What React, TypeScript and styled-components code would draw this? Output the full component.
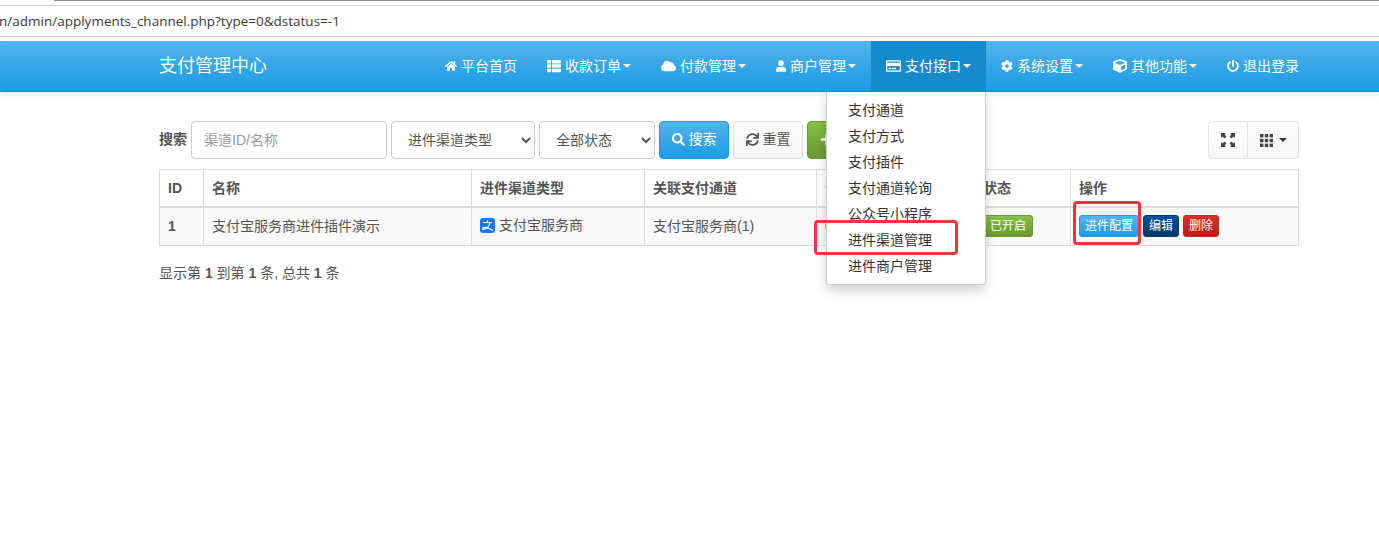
import React from 'react';
import styled, { createGlobalStyle } from 'styled-components';
import {
	FaHome,
	FaThList,
	FaCloud,
	FaUser,
	FaRegCreditCard,
	FaCog,
	FaCube,
	FaPowerOff,
	FaSearch,
	FaSync,
	FaPlus
} from 'react-icons/fa';

const GlobalStyle = createGlobalStyle`
	* {
		box-sizing: border-box;
	}
	html, body {
		margin: 0;
		padding: 0;
		background: #fff;
		overflow: hidden;
	}
	body {
		font-family: "Liberation Sans", "Noto Sans CJK SC", sans-serif;
		font-size: 14px;
		line-height: 20px;
		color: #333;
	}
`;

const Page = styled.div`
	position: relative;
	width: 1379px;
	height: 551px;
	overflow: hidden;
`;

const TopStrip = styled.div`
	height: 6px;
	border-bottom: 1px solid #d4d4d4;
	display: flex;
	justify-content: flex-end;
`;

const TabEdge = styled.div`
	width: 1325px;
	height: 1px;
	background: #8c8c8c;
`;

const AddressBar = styled.div`
	height: 31px;
	border-bottom: 1px solid #d0d0d0;
	display: flex;
	align-items: center;
	font-family: "Open Sans", "Liberation Sans", sans-serif;
	font-size: 13.5px;
	color: #3a3a3a;
	overflow: hidden;
`;

const Url = styled.span`
	margin-left: -8px;
	white-space: nowrap;
`;

const NavBar = styled.nav`
	margin-top: 4px;
	height: 51px;
	padding: 0 65px 0 159px;
	display: flex;
	align-items: stretch;
	justify-content: space-between;
	background: linear-gradient(to bottom, #54b4eb, #2fa4e7 60%, #1d9ce5);
	border-bottom: 1px solid #1b8fd3;
	box-shadow: 0 2px 6px rgba(0, 0, 0, 0.08);
`;

const Brand = styled.div`
	display: flex;
	align-items: center;
	padding-bottom: 1px;
	color: #fff;
	font-size: 18px;
`;

const NavList = styled.div`
	display: flex;
	align-items: stretch;
`;

const NavItem = styled.div<{ $active?: boolean }>`
	display: flex;
	align-items: center;
	gap: 4px;
	padding: 0 15px;
	color: #fff;
	font-size: 14px;
	white-space: nowrap;
	background: ${(p) => (p.$active ? '#178acc' : 'transparent')};
`;

const NavIcon = styled.span<{ $width: number }>`
	display: flex;
	justify-content: center;
	width: ${(p) => p.$width}px;
	svg {
		width: ${(p) => p.$width}px;
		height: 14px;
	}
`;

const Caret = styled.span<{ $dark?: boolean }>`
	width: 0;
	height: 0;
	margin-left: -2px;
	border-top: 4px solid ${(p) => (p.$dark ? '#333' : '#fff')};
	border-left: 4px solid transparent;
	border-right: 4px solid transparent;
`;

const Content = styled.main`
	padding: 29px 80px 0 159px;
`;

const Toolbar = styled.div`
	display: flex;
	align-items: center;
	gap: 4px;
	height: 38px;
`;

const SearchLabel = styled.label`
	margin-top: -2px;
	font-weight: 700;
	color: #555;
`;

const SearchInput = styled.input`
	width: 196px;
	height: 38px;
	padding: 0 12px 1px;
	border: 1px solid #ccc;
	border-radius: 4px;
	font: inherit;
	color: #555;
	&::placeholder {
		color: #999;
		opacity: 1;
	}
`;

const FilterSelect = styled.select<{ $width: number }>`
	width: ${(p) => p.$width}px;
	height: 38px;
	padding: 0 12px 1px;
	border: 1px solid #ccc;
	border-radius: 4px;
	background: #fff;
	font: inherit;
	color: #555;
`;

const Button = styled.button<{ $kind: 'primary' | 'plain' | 'success' }>`
	display: flex;
	align-items: center;
	justify-content: center;
	gap: 4px;
	width: 70px;
	height: 38px;
	padding: 0 0 2px;
	border-radius: 4px;
	font: inherit;
	svg {
		width: 13px;
		height: 13px;
	}
	${(p) =>
		p.$kind === 'primary' &&
		'color:#fff;border:1px solid #1f9be2;background:linear-gradient(to bottom,#54b4eb,#2fa4e7 60%,#1d9ce5);'}
	${(p) =>
		p.$kind === 'plain' &&
		'color:#555;border:1px solid #ddd;background:linear-gradient(to bottom,#fff,#f6f6f6);'}
	${(p) =>
		p.$kind === 'success' &&
		'color:#fff;border:1px solid #6a9c2c;background:linear-gradient(to bottom,#88c149,#73a839 60%,#699934);'}
`;

const RightGroup = styled.div`
	margin-left: auto;
	display: flex;
`;

const GroupButton = styled.div<{ $width: number; $first?: boolean }>`
	display: flex;
	align-items: center;
	justify-content: center;
	gap: 8px;
	width: ${(p) => p.$width}px;
	height: 38px;
	color: #444;
	border: 1px solid #e3e3e3;
	border-left-width: ${(p) => (p.$first ? 1 : 0)}px;
	border-radius: ${(p) => (p.$first ? '4px 0 0 4px' : '0 4px 4px 0')};
	background: linear-gradient(to bottom, #fff, #f6f6f6);
`;

const Table = styled.table`
	margin-top: 10px;
	width: 1139px;
	border-collapse: collapse;
	table-layout: fixed;
	color: #555;
`;

const HeadCell = styled.th<{ $width: number }>`
	width: ${(p) => p.$width}px;
	height: 37px;
	padding: 0 8px;
	text-align: left;
	font-weight: 700;
	border: 1px solid #ddd;
	border-bottom-width: 2px;
	white-space: nowrap;
	overflow: hidden;
`;

const Cell = styled.td<{ $bold?: boolean }>`
	height: 39px;
	padding: 0 8px;
	background: #f9f9f9;
	border: 1px solid #ddd;
	font-weight: ${(p) => (p.$bold ? 700 : 400)};
	white-space: nowrap;
	overflow: hidden;
`;

const ChannelName = styled.span`
	display: inline-flex;
	align-items: center;
	gap: 4px;
`;

const Badge = styled.span`
	display: block;
	width: fit-content;
	padding: 0 6px;
	height: 22px;
	line-height: 20px;
	font-size: 12px;
	color: #fff;
	border-radius: 3px;
	border: 1px solid #6a9c2c;
	background: linear-gradient(to bottom, #88c149, #73a839 60%, #699934);
`;

const Actions = styled.div`
	display: flex;
	gap: 4px;
`;

const ActionButton = styled.span<{ $from: string; $to: string; $line: string }>`
	display: block;
	height: 22px;
	line-height: 20px;
	padding: 0 5px;
	font-size: 12px;
	color: #fff;
	border-radius: 3px;
	border: 1px solid ${(p) => p.$line};
	background: linear-gradient(to bottom, ${(p) => p.$from}, ${(p) => p.$to});
`;

const Summary = styled.p`
	margin: 17px 0 0;
	color: #555;
`;

const Dropdown = styled.ul`
	position: absolute;
	left: 826px;
	top: 92px;
	width: 160px;
	height: 193px;
	margin: 0;
	padding: 5px 0;
	list-style: none;
	background: #fff;
	border: 1px solid #ccc;
	border-top: 0;
	border-radius: 0 0 4px 4px;
	box-shadow: 0 6px 12px rgba(0, 0, 0, 0.175);
`;

const DropdownItem = styled.li`
	height: 26px;
	line-height: 26px;
	padding-left: 21px;
	color: #333;
`;

const Annotation = styled.div<{ $left: number; $top: number; $width: number; $height: number }>`
	position: absolute;
	left: ${(p) => p.$left}px;
	top: ${(p) => p.$top}px;
	width: ${(p) => p.$width}px;
	height: ${(p) => p.$height}px;
	border: 3px solid #f0353f;
	border-radius: 4px;
`;

const navItems = [
	{ icon: <FaHome />, width: 12, label: '平台首页' },
	{ icon: <FaThList />, width: 14, label: '收款订单', menu: true },
	{ icon: <FaCloud />, width: 15, label: '付款管理', menu: true },
	{ icon: <FaUser />, width: 10, label: '商户管理', menu: true },
	{ icon: <FaRegCreditCard />, width: 15, label: '支付接口', menu: true, active: true },
	{ icon: <FaCog />, width: 12, label: '系统设置', menu: true },
	{ icon: <FaCube />, width: 14, label: '其他功能', menu: true },
	{ icon: <FaPowerOff />, width: 12, label: '退出登录' }
];

const menuItems = [
	'支付通道',
	'支付方式',
	'支付插件',
	'支付通道轮询',
	'公众号小程序',
	'进件渠道管理',
	'进件商户管理'
];

const columns = [
	{ label: 'ID', width: 44 },
	{ label: '名称', width: 268 },
	{ label: '进件渠道类型', width: 173 },
	{ label: '关联支付通道', width: 172 },
	{ label: '信息', width: 158 },
	{ label: '状态', width: 96 },
	{ label: '操作', width: 228 }
];

function AlipayIcon() {
	return (
		<svg width="15" height="15" viewBox="0 0 15 15">
			<rect width="15" height="15" rx="3" fill="#1677ff" />
			<path
				d="M3.500 4.500h8M7.500 2.800v1.700M10 4.500C9.400 7.600 7 10.600 3.800 11.400c-1.500.3-1.700-1.900.3-2 2.300-.2 5.500 1.200 8.400 2.900"
				fill="none"
				stroke="#fff"
				strokeWidth="1.200"
				strokeLinecap="round"
			/>
		</svg>
	);
}

function FullscreenIcon() {
	return (
		<svg width="14" height="14" viewBox="0 0 14 14" fill="#444">
			<path d="M0 0h5L3.500 1.500 5.500 3.500 3.500 5.500 1.500 3.500 0 5z" />
			<path d="M14 0H9l1.500 1.500-2 2 2 2 2-2L14 5z" />
			<path d="M0 14h5l-1.500-1.500 2-2-2-2-2 2L0 9z" />
			<path d="M14 14H9l1.500-1.500-2-2 2-2 2 2L14 9z" />
		</svg>
	);
}

function ColumnsIcon() {
	const cells = [0, 1, 2];
	return (
		<svg width="13" height="13" viewBox="0 0 13 13" fill="#444">
			{cells.map((row) =>
				cells.map((col) => (
					<rect key={`${row}-${col}`} x={col * 4.800} y={row * 4.800} width="3.400" height="3.400" />
				))
			)}
		</svg>
	);
}

export default function App() {
	return (
		<Page>
			<GlobalStyle />
			<TopStrip>
				<TabEdge />
			</TopStrip>
			<AddressBar>
				<Url>xn/admin/applyments_channel.php?type=0&amp;dstatus=-1</Url>
			</AddressBar>
			<NavBar>
				<Brand>支付管理中心</Brand>
				<NavList>
					{navItems.map((item) => (
						<NavItem key={item.label} $active={item.active}>
							<NavIcon $width={item.width}>{item.icon}</NavIcon>
							{item.label}
							{item.menu && <Caret />}
						</NavItem>
					))}
				</NavList>
			</NavBar>
			<Content>
				<Toolbar>
					<SearchLabel>搜索</SearchLabel>
					<SearchInput placeholder="渠道ID/名称" />
					<FilterSelect $width={144} defaultValue="type">
						<option value="type">进件渠道类型</option>
					</FilterSelect>
					<FilterSelect $width={116} defaultValue="all">
						<option value="all">全部状态</option>
					</FilterSelect>
					<Button $kind="primary">
						<FaSearch />
						搜索
					</Button>
					<Button $kind="plain">
						<FaSync />
						重置
					</Button>
					<Button $kind="success">
						<FaPlus />
						新增
					</Button>
					<RightGroup>
						<GroupButton $width={40} $first>
							<FullscreenIcon />
						</GroupButton>
						<GroupButton $width={51}>
							<ColumnsIcon />
							<Caret $dark />
						</GroupButton>
					</RightGroup>
				</Toolbar>
				<Table>
					<thead>
						<tr>
							{columns.map((col) => (
								<HeadCell key={col.label} $width={col.width}>
									{col.label}
								</HeadCell>
							))}
						</tr>
					</thead>
					<tbody>
						<tr>
							<Cell $bold>1</Cell>
							<Cell>支付宝服务商进件插件演示</Cell>
							<Cell>
								<ChannelName>
									<AlipayIcon />
									支付宝服务商
								</ChannelName>
							</Cell>
							<Cell>支付宝服务商(1)</Cell>
							<Cell>0</Cell>
							<Cell>
								<Badge>已开启</Badge>
							</Cell>
							<Cell>
								<Actions>
									<ActionButton $from="#54b4eb" $to="#1d9ce5" $line="#1f9be2">
										进件配置
									</ActionButton>
									<ActionButton $from="#04519b" $to="#02376b" $line="#033c73">
										编辑
									</ActionButton>
									<ActionButton $from="#e12e29" $to="#b71c18" $line="#bd2c25">
										删除
									</ActionButton>
								</Actions>
							</Cell>
						</tr>
					</tbody>
				</Table>
				<Summary>
					显示第 <b>1</b> 到第 <b>1</b> 条, 总共 <b>1</b> 条
				</Summary>
			</Content>
			<Dropdown>
				{menuItems.map((item) => (
					<DropdownItem key={item}>{item}</DropdownItem>
				))}
			</Dropdown>
			<Annotation $left={814} $top={220} $width={144} $height={35} />
			<Annotation $left={1073} $top={201} $width={68} $height={44} />
		</Page>
	);
}
